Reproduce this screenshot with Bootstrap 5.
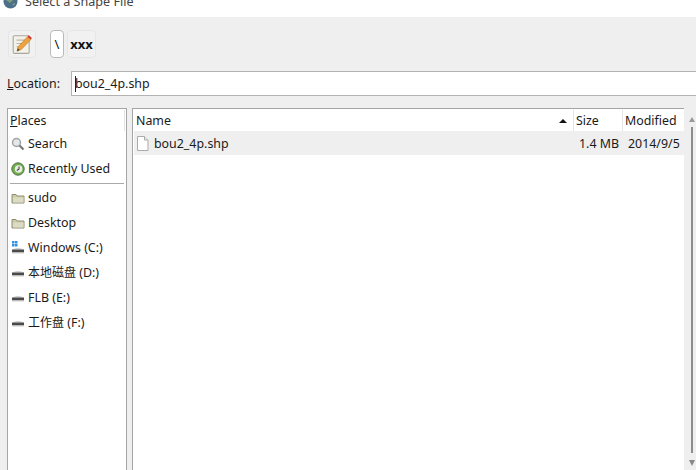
<!DOCTYPE html>
<html lang="zh">
<head>
<meta charset="utf-8">
<title>Select a Shape File</title>
<link rel="stylesheet" href="https://cdn.jsdelivr.net/npm/bootstrap@5.3.0/dist/css/bootstrap.min.css">
<style>
html,body{height:470px;overflow:hidden;margin:0;}
body{background:#efefef;font:12.4px/18px "Noto Sans","Noto Sans CJK SC",sans-serif;color:#1a1a1a;}
.dlg-title{height:17px;background:#fff;overflow:hidden;padding-left:3px;gap:7px;color:#444;font-size:12.6px;}
.dlg-globe{margin-bottom:8px;}
.dlg-title-txt{margin-bottom:6px;}
.dlg-tools{height:54px;padding:13px 0 0 8px;}
.tool-btn{height:28px;border:1px solid #e6e6e6;border-radius:4px;background:#f1f1f1;font-weight:700;font-size:13px;color:#111;}
.tool-edit{width:28px;}
.tool-sep{width:14px;margin-left:14px;background:#fff;border-color:#b9b9b9;font-weight:400;}
.tool-xxx{width:29px;margin-left:3px;}
.loc-row{height:25px;padding-left:7px;}
.loc-label{width:64px;}
.loc-input{height:25px;border:1px solid #b3b3b3;border-right:0;background:#fff;padding:0 0 0 3px;}
.caret-mark{width:1px;height:16px;background:#222;margin-right:-1px;}
.panes{height:362px;margin-top:12px;padding-left:7px;}
.pane-left{width:120px;background:#fff;border:1px solid #a5a5a8;border-bottom:0;}
.pane-files{width:552px;margin-left:5px;background:#fff;border:1px solid #a5a5a8;border-width:1px 0 0 1px;}
.left-head{height:22px;padding:1px 0 0 2px;}
.left-row{height:25px;padding-left:3px;gap:3px;}
.left-row svg{flex:none;}
.left-rule{height:1px;background:#aaa;margin:2px 2px 1px;}
.grip{width:1px;height:21px;background:#e2e2e2;margin-right:1px;}
.cjk{font-size:12px;}
.file-head{height:22px;padding-top:1px;}
.col-name{width:440px;padding-left:3px;}
.col-size{width:49px;padding-left:2px;border-left:1px solid #e4e4e4;}
.col-mod{width:62px;padding-left:2px;border-left:1px solid #e4e4e4;}
.file-row{height:24px;background:#efefef;margin-left:1px;padding-top:1px;}
.file-name{width:439px;padding-left:2px;gap:5px;}
.file-size{width:49px;text-align:right;padding-right:3px;}
.file-mod{width:62px;padding-left:6px;white-space:nowrap;}
.sort-up{width:0;height:0;border:4px solid transparent;border-top:0;border-bottom:4px solid #111;margin-right:6px;}
.vbar{width:12px;}
.vbar-up,.vbar-down{width:0;height:0;border:3.5px solid transparent;margin-left:5px;}
.vbar-up{border-top:0;border-bottom:5px solid #999;margin-top:9px;}
.vbar-down{border-bottom:0;border-top:6px solid #888;margin-bottom:4px;}
.vbar-line{width:2px;background:#8c8c8c;margin:5px 0 7px 7px;}
</style>
</head>
<body>
<div class="dlg-title d-flex align-items-end">
  <svg width="15" height="15" viewBox="0 0 15 15" class="flex-shrink-0 dlg-globe"><circle cx="7.5" cy="7.5" r="7" fill="#4c6f8c"/><path d="M3 6l4-3 3 3-3 3zM9 10l3-1-1 3z" fill="#7f9c77"/></svg>
  <span class="dlg-title-txt flex-shrink-0">Select a Shape File</span>
</div>
<div class="dlg-tools d-flex align-items-start">
  <div class="tool-btn tool-edit d-flex align-items-center justify-content-center">
    <svg width="22" height="22" viewBox="0 0 20 20"><rect x="2" y="2.5" width="14.5" height="16" rx="1" fill="#f4f1e8" stroke="#a8a8a0"/><path d="M5 6.500h8M5 9.500h6M5 12.500h4" stroke="#b9b6aa"/><path d="M5.500 16.500l1-4L15 3.500l3 2.500-8.500 8.800z" fill="#eea43a" stroke="#b8752a" stroke-width=".6"/><path d="M15 3.500l1.200-1.400 2.800 2.400L18 6z" fill="#d8333a"/><path d="M5.500 16.500l.6-2.600 2 1.600z" fill="#5a4a35"/></svg>
  </div>
  <div class="tool-btn tool-sep d-flex align-items-center justify-content-center">\</div>
  <div class="tool-btn tool-xxx d-flex align-items-center justify-content-center">xxx</div>
</div>
<div class="loc-row d-flex align-items-center">
  <div class="loc-label"><u>L</u>ocation:</div>
  <div class="loc-input flex-grow-1 d-flex align-items-center"><span class="caret-mark"></span><span>bou2_4p.shp</span></div>
</div>
<div class="panes d-flex">
  <div class="pane-left">
    <div class="left-head d-flex align-items-center justify-content-between"><span><u>P</u>laces</span><span class="grip"></span></div>
    <div class="left-row d-flex align-items-center">
      <svg width="14" height="14" viewBox="0 0 14 14"><circle cx="5.500" cy="5.500" r="4" fill="#e4e8ec" stroke="#a3a3a3" stroke-width="1.500"/><path d="M8.500 8.500l4 4" stroke="#777" stroke-width="2.200"/></svg>
      <span>Search</span></div>
    <div class="left-row d-flex align-items-center">
      <svg width="14" height="14" viewBox="0 0 14 14"><circle cx="7" cy="7" r="6.200" fill="#6fb04a" stroke="#5a6a50"/><circle cx="7.600" cy="7" r="3.800" fill="#e8eee4"/><path d="M8 4.500V7L5.800 8.500" fill="none" stroke="#444" stroke-width="1.100"/></svg>
      <span>Recently Used</span></div>
    <div class="left-rule"></div>
    <div class="left-row d-flex align-items-center"><svg width="14" height="14" viewBox="0 0 14 14"><path d="M1 3.500h4l1 1.500h7v7H1z" fill="#ccccaa" stroke="#8f8f74"/><path d="M2 6.500h10.500v5H2z" fill="#dcdcc4"/></svg><span>sudo</span></div>
    <div class="left-row d-flex align-items-center"><svg width="14" height="14" viewBox="0 0 14 14"><path d="M1 3.500h4l1 1.500h7v7H1z" fill="#ccccaa" stroke="#8f8f74"/><path d="M2 6.500h10.500v5H2z" fill="#dcdcc4"/></svg><span>Desktop</span></div>
    <div class="left-row d-flex align-items-center"><svg width="14" height="14" viewBox="0 0 14 14"><path d="M1 0h2.500v2.500H1zM4 0h2.500v2.500H4zM1 3h2.500v2.500H1zM4 3h2.500v2.500H4z" fill="#2f8fe0"/><path d="M1 8.500q6-3 12 0z" fill="#c9c9c9"/><rect x="1" y="8.500" width="12" height="3" fill="#4a4a4a"/><rect x="1" y="11.500" width="12" height="1" fill="#cfcfcf"/></svg><span>Windows (C:)</span></div>
    <div class="left-row d-flex align-items-center"><svg width="14" height="14" viewBox="0 0 14 14"><path d="M1 6.500q6-3 12 0z" fill="#c9c9c9"/><rect x="1" y="6.500" width="12" height="3" fill="#4a4a4a"/><rect x="1" y="9.500" width="12" height="1" fill="#cfcfcf"/></svg><span><span class="cjk">本地磁盘</span> (D:)</span></div>
    <div class="left-row d-flex align-items-center"><svg width="14" height="14" viewBox="0 0 14 14"><path d="M1 6.500q6-3 12 0z" fill="#c9c9c9"/><rect x="1" y="6.500" width="12" height="3" fill="#4a4a4a"/><rect x="1" y="9.500" width="12" height="1" fill="#cfcfcf"/></svg><span>FLB (E:)</span></div>
    <div class="left-row d-flex align-items-center"><svg width="14" height="14" viewBox="0 0 14 14"><path d="M1 6.500q6-3 12 0z" fill="#c9c9c9"/><rect x="1" y="6.500" width="12" height="3" fill="#4a4a4a"/><rect x="1" y="9.500" width="12" height="1" fill="#cfcfcf"/></svg><span><span class="cjk">工作盘</span> (F:)</span></div>
  </div>
  <div class="pane-files">
    <div class="file-head d-flex">
      <div class="col-name d-flex align-items-center justify-content-between"><span>Name</span><span class="sort-up"></span></div>
      <div class="col-size d-flex align-items-center">Size</div>
      <div class="col-mod d-flex align-items-center">Modified</div>
    </div>
    <div class="file-row d-flex align-items-center">
      <div class="file-name d-flex align-items-center">
        <svg width="13" height="15" viewBox="0 0 13 15"><path d="M1.500.5h7l3.500 3.500v10.500H1.500z" fill="#fff" stroke="#aaa"/><path d="M8.500.5V4H12" fill="#eee" stroke="#aaa"/></svg>
        <span>bou2_4p.shp</span></div>
      <div class="file-size">1.4 MB</div>
      <div class="file-mod">2014/9/5</div>
    </div>
  </div>
  <div class="vbar d-flex flex-column">
    <div class="vbar-up"></div>
    <div class="vbar-line flex-grow-1"></div>
    <div class="vbar-down"></div>
  </div>
</div>
<script src="https://cdn.jsdelivr.net/npm/bootstrap@5.3.0/dist/js/bootstrap.bundle.min.js"></script>
</body>
</html>
